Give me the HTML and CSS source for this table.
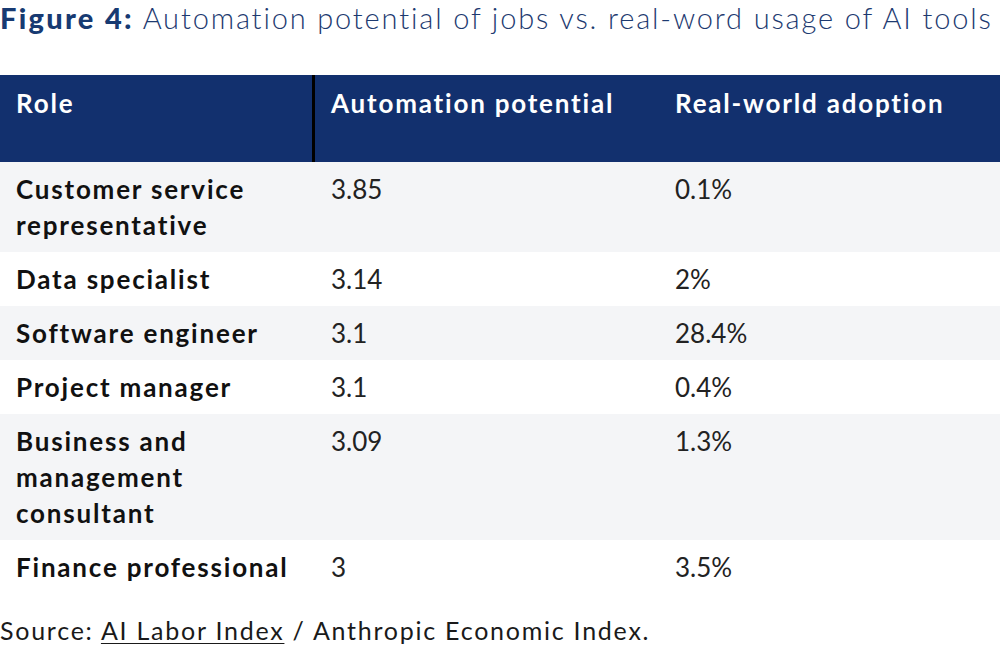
FILE: index.html
```html
<!DOCTYPE html>
<html lang="en">
<head>
<meta charset="utf-8">
<title>Figure 4</title>
<link rel="stylesheet" href="styles.css">
</head>
<body>
<div class="page">
  <h1 class="title"><span class="title-label">Figure 4:</span> Automation potential of jobs vs. real-word usage of AI tools</h1>
  <div class="table">
    <div class="row head">
      <div class="cell c1">Role</div>
      <div class="cell c2">Automation potential</div>
      <div class="cell c3">Real-world adoption</div>
    </div>
    <div class="row alt">
      <div class="cell c1">Customer service representative</div>
      <div class="cell c2">3.85</div>
      <div class="cell c3">0.1%</div>
    </div>
    <div class="row">
      <div class="cell c1">Data specialist</div>
      <div class="cell c2">3.14</div>
      <div class="cell c3">2%</div>
    </div>
    <div class="row alt">
      <div class="cell c1">Software engineer</div>
      <div class="cell c2">3.1</div>
      <div class="cell c3">28.4%</div>
    </div>
    <div class="row">
      <div class="cell c1">Project manager</div>
      <div class="cell c2">3.1</div>
      <div class="cell c3">0.4%</div>
    </div>
    <div class="row alt">
      <div class="cell c1">Business and management consultant</div>
      <div class="cell c2">3.09</div>
      <div class="cell c3">1.3%</div>
    </div>
    <div class="row">
      <div class="cell c1">Finance professional</div>
      <div class="cell c2">3</div>
      <div class="cell c3">3.5%</div>
    </div>
  </div>
  <p class="source">Source: <span class="link">AI Labor Index</span> / Anthropic Economic Index.</p>
</div>
</body>
</html>
```

FILE: styles.css
```css
html, body {
  margin: 0;
  padding: 0;
  background: #ffffff;
}

.page {
  width: 1000px;
  font-family: Lato, "Open Sans", sans-serif;
}

.title {
  margin: 0;
  height: 75px;
  font-size: 29px;
  line-height: 35px;
  font-weight: 300;
  letter-spacing: 1.85px;
  color: #1d3a70;
  white-space: nowrap;
}

.title-label {
  font-weight: 900;
  letter-spacing: 2.3px;
  color: #173a72;
}

.table {
  display: flex;
  flex-direction: column;
}

.row {
  display: grid;
  grid-template-columns: 315px 344px 1fr;
  background: #ffffff;
}

.row.alt {
  background: #f4f5f7;
}

.cell {
  padding: 9px 16px 9px 16px;
  font-size: 26px;
  line-height: 36px;
  color: #222222;
  font-weight: 400;
}

.cell.c1 {
  font-weight: 700;
  letter-spacing: 1.8px;
  color: #111111;
  padding-right: 12px;
}

.row.head {
  background: #12306e;
  height: 87px;
}

.row.head .cell {
  color: #ffffff;
  font-weight: 700;
  letter-spacing: 1.8px;
  padding-top: 10px;
}

.row.head .c1 {
  border-right: 3px solid #000000;
}

.source {
  margin: 21px 0 0 0;
  font-size: 25px;
  line-height: 30px;
  font-weight: 400;
  letter-spacing: 1.75px;
  color: #1a1a1a;
}

.link {
  text-decoration: underline;
  text-underline-offset: 3px;
  text-decoration-thickness: 1px;
}
```
